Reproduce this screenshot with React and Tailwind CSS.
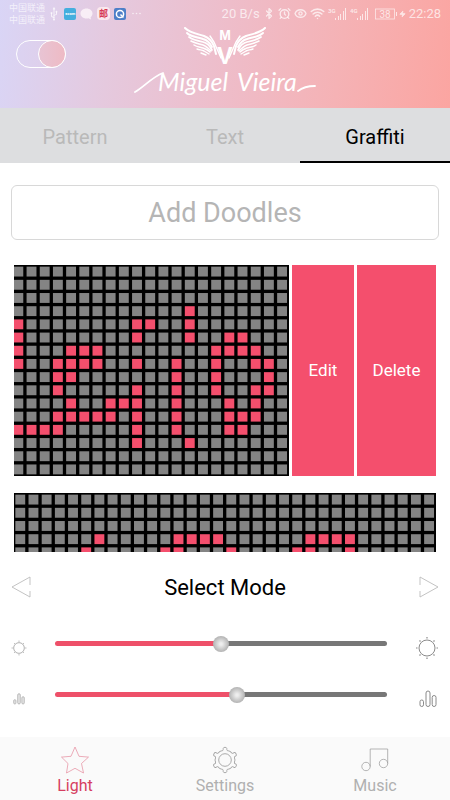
import React, { useState } from 'react';
import { Bluetooth, AlarmClock, Eye, Wifi, Zap, Usb } from 'lucide-react';

const TABS = ['Pattern', 'Text', 'Graffiti'];

// LED doodles, 32 x 16. '#' is a lit cell, missing cells are off.
const DOODLES = [
  {
    id: 1,
    swiped: true,
    rows: [
      '',
      '',
      '',
      '........................#',
      '...........#........##..#',
      '...........#........#...#..##',
      '...........#...###........####',
      '...........#..####..#..#..#..##',
      '..............##.......#..#...#',
      '..............#.....#..#..#..##',
      '...............#..###..#...#.#',
      '..............#####.#..#...###',
      '...........####.....#..#...##',
      '....................#...#',
    ],
  },
  {
    id: 2,
    swiped: false,
    rows: [
      '',
      '',
      '',
      '......#.....####......####',
      '.....#.....##...#....##..#',
      '....#......#....#....#...#',
    ],
  },
];

function DotMatrix({ rows, className }) {
  const cells = [];
  for (let y = 0; y < 16; y++) {
    for (let x = 0; x < 32; x++) {
      const on = rows[y] && rows[y][x] === '#';
      cells.push(
        <rect key={`${x}-${y}`} x={x * 40 + 4} y={y * 40 + 5} width="30" height="30" fill={on ? '#f44f6d' : '#848484'} />
      );
    }
  }
  return (
    <svg viewBox="0 0 1280 640" preserveAspectRatio="xMaxYMid slice" className={className}>
      <rect width="1280" height="640" fill="#000" />
      {cells}
    </svg>
  );
}

function Signal({ label }) {
  return (
    <svg viewBox="0 0 19 14" className="w-[19px] h-[14px]" fill="currentColor">
      <text x="0" y="6" fontSize="6" fontWeight="700">{label}</text>
      <rect x="7" y="11" width="1" height="2" />
      <rect x="10" y="9" width="1" height="4" />
      <rect x="12" y="7" width="1" height="6" />
      <rect x="15" y="4" width="1" height="9" />
      <rect x="17" y="1" width="1" height="12" />
    </svg>
  );
}

function StatusBar() {
  return (
    <div className="flex items-center justify-between pl-[9px] pr-[9px] h-[27px] text-white/70">
      <div className="flex items-center gap-1">
        <div className="w-[35px] text-[9px] leading-[12px] whitespace-nowrap font-['Noto_Sans_CJK_SC',sans-serif]">
          <p>中国联通</p>
          <p>中国联通</p>
        </div>
        <Usb className="w-[12px] h-[12px] -rotate-45" />
        <svg viewBox="0 0 12 12" className="w-[12px] h-[12px]">
          <rect width="12" height="12" rx="2" fill="#45aede" />
          <text x="6" y="7" fontSize="4" fontWeight="700" textAnchor="middle" fill="#fff">●com</text>
        </svg>
        <svg viewBox="0 0 13 12" className="w-[13px] h-[12px]" fill="#f8eef6">
          <path d="M6.500.500C3 .500.500 2.700.500 5.500s2.500 5 6 5c.700 0 1.300-.100 1.900-.200L11 11.500l-.400-2.200C11.800 8.300 12.500 7 12.500 5.500c0-2.800-2.500-5-6-5z" />
        </svg>
        <span className="w-[13px] h-[13px] rounded-sm bg-[#fae9ee] text-center text-[9px] leading-[13px] font-bold text-[#d63a54] font-['Noto_Sans_CJK_SC',sans-serif]">
          邮
        </span>
        <svg viewBox="0 0 12 12" className="w-[12px] h-[12px]">
          <rect width="12" height="12" rx="2" fill="#4d7fc8" />
          <circle cx="6" cy="6" r="3.600" fill="none" stroke="#fff" strokeWidth="1.500" />
          <path d="M6.500 6.500l3 3" stroke="#fff" strokeWidth="1.500" />
        </svg>
        <svg viewBox="0 0 9 3" className="w-[9px] h-[3px] ml-[2px]" fill="currentColor">
          <circle cx="1" cy="1.500" r="0.800" />
          <circle cx="4.500" cy="1.500" r="0.800" />
          <circle cx="8" cy="1.500" r="0.800" />
        </svg>
      </div>
      <div className="flex items-center gap-[3px] text-[13px] leading-none">
        <span>20 B/s</span>
        <Bluetooth className="w-[12px] h-[15px]" strokeWidth={2.5} />
        <AlarmClock className="w-[13px] h-[13px]" strokeWidth={2.5} />
        <Eye className="w-[13px] h-[13px]" strokeWidth={2.5} />
        <Wifi className="w-[15px] h-[15px]" strokeWidth={2.5} />
        <Signal label="3G" />
        <Signal label="4G" />
        <svg viewBox="0 0 23 12" className="w-[23px] h-[12px] ml-[3px]" fill="currentColor">
          <rect x="0.500" y="1" width="19" height="10" fill="none" stroke="currentColor" strokeWidth="0.800" />
          <rect x="21" y="4" width="1" height="4" />
          <text x="10" y="9.500" fontSize="10" textAnchor="middle">38</text>
        </svg>
        <Zap className="w-[7px] h-[10px] -ml-[2px]" fill="currentColor" />
        <span>22:28</span>
      </div>
    </div>
  );
}

function Wing() {
  return (
    <g fill="none" stroke="#fff" strokeLinecap="round">
      <path d="M51 1c5 5 13 6 19 8 5 2 8 5 10 10l2 8" strokeWidth="2" />
      <path d="M53 6c4 4 10 4 16 6 4 1 7 4 9 8" strokeWidth="1.900" />
      <path d="M55 10c4 3 9 4 14 5 4 1 7 4 9 8" strokeWidth="1.700" />
      <path d="M57 14c4 2 8 3 12 4 3 1 5 3 8 6" strokeWidth="1.600" />
      <path d="M60 18c3 2 6 2 9 3 3 1 5 2 7 4" strokeWidth="1.500" />
      <path d="M63 22c3 1 5 1 7 2l5 3" strokeWidth="1.400" />
      <path d="M67 26l5 2" strokeWidth="1.400" />
      <path d="M76 9l4 6 7 16" strokeWidth="1.400" />
    </g>
  );
}

function Logo() {
  return (
    <svg viewBox="0 0 182 76" className="w-[182px] h-[76px]" role="img" aria-label="Miguel Vieira">
      <Wing />
      <g transform="translate(182 0) scale(-1 1)">
        <Wing />
      </g>
      <g fill="#fff" fontFamily="Liberation Sans" fontWeight="700" textAnchor="middle">
        <text x="91" y="13" fontSize="14">M</text>
        <text x="91" y="37" fontSize="23">V</text>
      </g>
      <g fill="#fff" fontFamily="Lato" fontStyle="italic">
        <text x="24" y="64" fontSize="25">Miguel</text>
        <text x="103" y="64" fontSize="25">Vieira</text>
      </g>
      <path d="M1 65C10 60 18 50 29 46M164 64c5-4 10-5 17-5" fill="none" stroke="#fff" strokeWidth="1.800" strokeLinecap="round" />
    </svg>
  );
}

function SunIcon({ className }) {
  return (
    <svg viewBox="0 0 24 24" className={className} fill="none" stroke="#8a8a8a">
      <circle cx="12" cy="12" r="8" strokeWidth="1" />
      <path d="M12 1v1.500M12 21.500V23M1 12h1.500M21.500 12H23M4.500 4.500l1 1M18.500 18.500l1 1M4.500 19.500l1-1M18.500 5.500l1-1" strokeWidth="1.200" />
    </svg>
  );
}

function BarsIcon({ className, fill = 'none', stroke = '#8a8a8a' }) {
  return (
    <svg viewBox="0 0 18 18" className={className} fill={fill} stroke={stroke}>
      <rect x="1" y="10" width="3.500" height="6.500" rx="1.700" />
      <rect x="7" y="1" width="4" height="15.500" rx="2" />
      <rect x="13.200" y="5.500" width="3.800" height="11" rx="1.900" />
    </svg>
  );
}

function StarIcon() {
  return (
    <svg viewBox="0 0 28 28" className="w-7 h-7" fill="none" stroke="#e58a9c" strokeWidth="0.700">
      <path d="M14 1l4 9.300 9.500.800-7 6.400 2 9.500-8.500-4.700L5.500 27l1.500-9.500-6.500-6.400 9.500-.800z" />
    </svg>
  );
}

function GearIcon() {
  const teeth = [0, 60, 120, 180, 240, 300];
  return (
    <svg viewBox="0 0 28 28" className="w-7 h-7" fill="none" stroke="#a2a2a2" strokeWidth="0.900">
      <circle cx="14" cy="14" r="6.300" />
      {teeth.map(a => (
        <path
          key={a}
          transform={`rotate(${a} 14 14)`}
          d="M9 5.400C10.500 4.500 12.200 5.200 12.200 3.500V2.500c0-1.600 3.600-1.600 3.600 0v1c0 1.700 1.700 1 3.200 1.900"
        />
      ))}
    </svg>
  );
}

function MusicIcon() {
  return (
    <svg viewBox="0 0 28 28" className="w-7 h-7" fill="none" stroke="#a2a2a2" strokeWidth="0.800">
      <circle cx="5" cy="20.500" r="4.200" />
      <circle cx="22.500" cy="17.500" r="4.200" />
      <path d="M9.200 20.500V3h17.500v14.500" />
    </svg>
  );
}

const NAV = [
  { label: 'Light', Icon: StarIcon },
  { label: 'Settings', Icon: GearIcon },
  { label: 'Music', Icon: MusicIcon },
];

function Slider({ label, value, onChange }) {
  // the thumb is 16px wide, so its centre travels over the width less 16px
  const stop = `calc(8px + (100% - 16px) * ${value / 100})`;
  return (
    <input
      type="range"
      aria-label={label}
      min="0"
      max="100"
      value={value}
      onChange={e => onChange(Number(e.target.value))}
      style={{ background: `linear-gradient(to right, #ee5069 ${stop}, #777777 ${stop})` }}
      className="flex-1 min-w-0 h-[5px] mb-2 rounded-full appearance-none cursor-pointer [&::-webkit-slider-thumb]:appearance-none [&::-webkit-slider-thumb]:w-4 [&::-webkit-slider-thumb]:h-4 [&::-webkit-slider-thumb]:rounded-full [&::-webkit-slider-thumb]:bg-[radial-gradient(circle,#eeeeee_10%,#bdbdbd_60%,#999999_100%)]"
    />
  );
}

export default function App() {
  const [power, setPower] = useState(true);
  const [tab, setTab] = useState('Graffiti');
  const [nav, setNav] = useState('Light');
  const [brightness, setBrightness] = useState(50);
  const [speed, setSpeed] = useState(55);

  return (
    <div className="h-screen flex flex-col bg-white font-[Roboto,sans-serif]">
      <header className="shrink-0 h-[108px] bg-[linear-gradient(97deg,#d9d5f6_0%,#e5c9de_25%,#eebdca_50%,#f5b2b5_75%,#fba5a1_100%)]">
        <StatusBar />
        <div className="grid grid-cols-[1fr_auto_1fr]">
          <input
            type="checkbox"
            role="switch"
            aria-label="Power"
            checked={power}
            onChange={e => setPower(e.target.checked)}
            className="appearance-none flex w-[50px] h-7 ml-4 mt-[13px] rounded-full border border-white cursor-pointer checked:justify-end before:content-[''] before:w-7 before:h-7 before:-m-px before:rounded-full before:border before:border-white before:bg-linear-to-r before:from-[#e8c4d4] before:to-[#eebac4]"
          />
          <Logo />
        </div>
      </header>

      <div role="tablist" className="shrink-0 grid grid-cols-3 h-[55px] bg-[#dddee0]">
        {TABS.map(t => (
          <button
            key={t}
            role="tab"
            aria-selected={tab === t}
            onClick={() => setTab(t)}
            className={`pt-1 text-xl border-b-2 ${tab === t ? 'text-black border-black' : 'text-[#b9b9b9] border-transparent'}`}
          >
            {t}
          </button>
        ))}
      </div>

      <div className="shrink-0 px-[11px] pt-[22px] pb-6">
        <button className="w-full h-[55px] pt-0.5 rounded-md border border-[#d8d8d8] text-[27px] text-[#b5b5b5]">
          Add Doodles
        </button>
      </div>

      <ul className="flex-1 min-h-0 overflow-y-auto [scrollbar-width:none] flex flex-col gap-[17px] px-[14px] pt-px">
        {DOODLES.map(d => (
          <li key={d.id} className="shrink-0 w-full aspect-[2/1] flex gap-[3px] text-white text-[17px]">
            <DotMatrix rows={d.rows} className="flex-1 min-w-0 h-full" />
            {d.swiped && (
              <>
                <button className="w-[62px] bg-[#f44f6d]">Edit</button>
                <button className="w-[79px] bg-[#f44f6d]">Delete</button>
              </>
            )}
          </li>
        ))}
      </ul>

      <section className="shrink-0 px-[11px] pb-[13px]">
        <div className="flex items-center justify-between h-[70px]">
          <button aria-label="Previous mode">
            <svg viewBox="0 0 20 22" className="w-5 h-[22px]" fill="none" stroke="#bcbcbc" strokeWidth="0.900">
              <path d="M19 9V1L1 11l18 10v-6" />
            </svg>
          </button>
          <h2 className="text-[22px] text-black">Select Mode</h2>
          <button aria-label="Next mode">
            <svg viewBox="0 0 20 22" className="w-5 h-[22px]" fill="none" stroke="#bcbcbc" strokeWidth="0.900">
              <path d="M1 9V1l18 10L1 21v-6" />
            </svg>
          </button>
        </div>
        <div className="flex items-center h-[51px]">
          <div className="w-11"><SunIcon className="w-4 h-4" /></div>
          <Slider label="Brightness" value={brightness} onChange={setBrightness} />
          <div className="w-[52px] flex justify-end"><SunIcon className="w-6 h-6" /></div>
        </div>
        <div className="flex items-center h-[51px]">
          <div className="w-11 pl-0.5"><BarsIcon className="w-3 h-3" fill="#e2e2e2" stroke="#a8a8a8" /></div>
          <Slider label="Speed" value={speed} onChange={setSpeed} />
          <div className="w-[52px] flex justify-end pr-0.5"><BarsIcon className="w-[18px] h-[18px]" /></div>
        </div>
      </section>

      <nav className="shrink-0 grid grid-cols-3 h-[63px] bg-[#fafafa]">
        {NAV.map(({ label, Icon }) => (
          <button
            key={label}
            onClick={() => setNav(label)}
            className={`flex flex-col items-center pt-[9px] text-base leading-6 ${nav === label ? 'text-[#d63e60]' : 'text-[#b0b0b0]'}`}
          >
            <Icon />
            {label}
          </button>
        ))}
      </nav>
    </div>
  );
}
